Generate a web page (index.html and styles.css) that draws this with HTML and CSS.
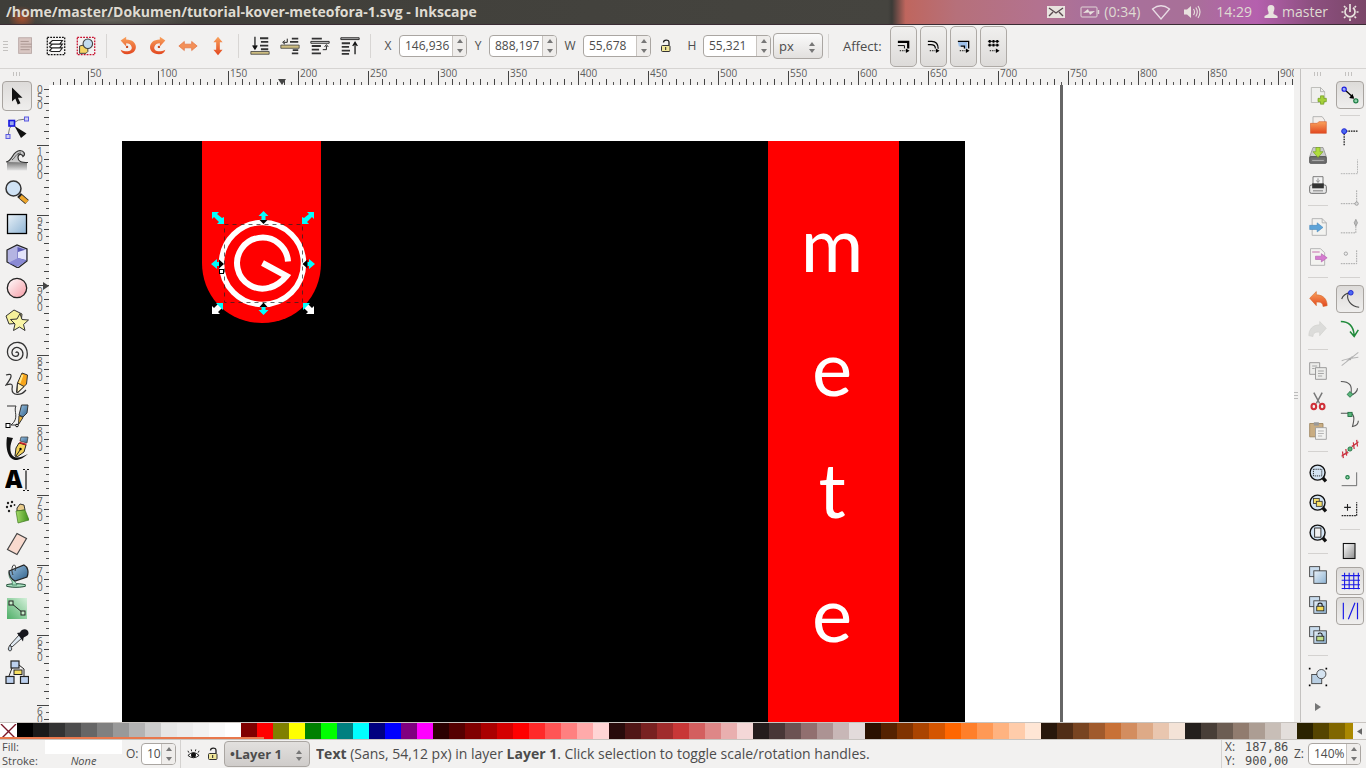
FILE: index.html
```html
<!DOCTYPE html>
<html lang="id">
<head>
<meta charset="utf-8">
<title>tutorial-kover-meteofora-1.svg - Inkscape</title>
<link rel="stylesheet" href="styles.css">
</head>
<body>
<svg class="defs" width="0" height="0" aria-hidden="true">
  <defs>
    <linearGradient id="orange" x1="0" y1="0" x2="0" y2="1"><stop offset="0" stop-color="#f9a25c"/><stop offset="1" stop-color="#e2471f"/></linearGradient>
    <linearGradient id="blue" x1="0" y1="0" x2="1" y2="1"><stop offset="0" stop-color="#e8f1f8"/><stop offset="1" stop-color="#8fb4d4"/></linearGradient>
    <linearGradient id="steel" x1="0" y1="0" x2="1" y2="1"><stop offset="0" stop-color="#9cc4e4"/><stop offset="1" stop-color="#2f5f88"/></linearGradient>
    <linearGradient id="page" x1="0" y1="0" x2="1" y2="1"><stop offset="0" stop-color="#ffffff"/><stop offset="1" stop-color="#8d8d8d"/></linearGradient>
    <linearGradient id="wave" x1="0" y1="0" x2="0" y2="1"><stop offset="0" stop-color="#777777"/><stop offset="1" stop-color="#e4e4e4"/></linearGradient>
    <linearGradient id="green" x1="0" y1="0" x2="1" y2="0"><stop offset="0" stop-color="#a6dc6a"/><stop offset="1" stop-color="#3f8f1c"/></linearGradient>
    <linearGradient id="mint" x1="0" y1="1" x2="1" y2="0"><stop offset="0" stop-color="#4faf68"/><stop offset="1" stop-color="#d4f0da"/></linearGradient>
    <linearGradient id="pink" x1="0" y1="0" x2="1" y2="1"><stop offset="0" stop-color="#ffffff"/><stop offset="1" stop-color="#f59aa4"/></linearGradient>
    <symbol id="i-lock" viewBox="0 0 14 16"><path d="M4.500 4.500C4.500 1.500 10 1 10 4.500V7" fill="none" stroke="#222" stroke-width="1.300"/><rect x="2.500" y="7.500" width="8.500" height="6" rx="1" fill="#f1e79a" stroke="#333"/><path d="M6.700 9v3" stroke="#222"/></symbol>
    <symbol id="i-zoom" viewBox="0 0 24 24"><path d="M17 17l4.500 5" stroke="#111" stroke-width="4"/><circle cx="11.500" cy="11.500" r="9" fill="#d4e4f3" stroke="#111" stroke-width="1.700"/></symbol>
    <symbol id="i-dup" viewBox="0 0 24 24"><rect x="2" y="2" width="12" height="12" fill="#c9dced" stroke="#333"/><rect x="7" y="7" width="15" height="15" fill="url(#blue)" stroke="#333"/></symbol>
  </defs>
</svg>

<header class="titlebar">
  <h1 class="titlebar-name">/home/master/Dokumen/tutorial-kover-meteofora-1.svg - Inkscape</h1>
  <div class="indicators">
    <svg class="ind-mail" viewBox="0 0 20 16"><rect x="1" y="2" width="18" height="12" fill="#e8e2de"/><path d="M3 4l7 5 7-5M3 12l4-4M17 12l-4-4" fill="none" stroke="#5a4a50" stroke-width="1.400"/></svg>
    <span class="ind-battery"><svg viewBox="0 0 20 14"><rect x="1" y="2" width="16" height="10" rx="1" fill="none" stroke="#e0d6d6"/><path d="M18.500 5v4" stroke="#e0d6d6" stroke-width="1.500"/><path d="M3 8l5-4 1 2.500L15 6l-5 4-1-2.500z" fill="#e8e2de"/></svg>(0:34)</span>
    <svg class="ind-wifi" viewBox="0 0 20 18"><path d="M1.500 6Q10-.5 18.500 6L10 16z" fill="none" stroke="#e8dce4" stroke-width="1.300"/></svg>
    <svg class="ind-sound" viewBox="0 0 18 16"><path d="M1 5.500h3L8 2v12L4 10.500H1z" fill="#e8e2de"/><path d="M10.500 5q2 3 0 6M12.800 3.500q3 4.500 0 9M15 2q4 6 0 12" fill="none" stroke="#e8e2de" stroke-width="1.100"/></svg>
    <time>14:29</time>
    <span class="ind-user"><svg viewBox="0 0 14 16"><path d="M7 1c4 0 4 4 2.500 7v2l4 2v2H.5v-2l4-2V8C3 5 3 1 7 1z" fill="#e8e2de"/></svg>master</span>
    <svg class="ind-power" viewBox="0 0 18 18"><g fill="none" stroke="#e8e2de" stroke-width="1.700"><path d="M6 4.800a5 5 0 1 0 6 0M9 1v8"/><path d="M2.500 9H.5M17.500 9h-2M9 15.500V18M3 3l1.500 1.500M15 3l-1.500 1.500M3 15l1.500-1.500M15 15l-1.500-1.500"/></g></svg>
  </div>
</header>

<div class="toolbar" role="toolbar" aria-label="Tool controls">
  <i class="grip"></i>
  <button class="tb" aria-label="Select all"><svg viewBox="0 0 24 24"><rect x="4" y="3" width="14" height="17" fill="#d9c7c3" stroke="#b9a9a6"/><path d="M6 7h9M6 10h12M6 13h12M6 16h10" stroke="#a5908c"/></svg></button>
  <button class="tb" aria-label="Select all in all layers"><svg viewBox="0 0 24 24"><rect x="2.500" y="2.500" width="19" height="19" fill="none" stroke="#111" stroke-width="1.400" stroke-dasharray="2 1.200"/><path d="M5 17l3-3h11l-3 4H7zM5 13l3-3h11l-3 4H7zM5 9l3-3h11l-3 4H7z" fill="#fff" stroke="#222" stroke-width="1.200"/></svg></button>
  <button class="tb" aria-label="Deselect"><svg viewBox="0 0 24 24"><rect x="2.500" y="2.500" width="19" height="19" fill="none" stroke="#c8102e" stroke-width="1.400" stroke-dasharray="2 1.200"/><path d="M5 12l9-2v8l-2 2H5z" fill="#f5d565" stroke="#333"/><circle cx="14" cy="9.500" r="5.200" fill="#c3dcf0" stroke="#444" stroke-width="1.200"/></svg></button>
  <i class="vsep"></i>
  <button class="tb" aria-label="Rotate left"><svg viewBox="0 0 24 24"><path d="M4 6l6-4v3c14 0 14 16 1 16-4 0-6-2-7-5 6 3 13 2 12-3-1-3-3-4-6-4v3.500z" fill="url(#orange)"/><circle cx="11" cy="13" r="1.300" fill="#c94a20"/></svg></button>
  <button class="tb" aria-label="Rotate right"><svg viewBox="0 0 24 24"><path d="M20 6l-6-4v3C0 5 0 21 13 21c4 0 6-2 7-5-6 3-13 2-12-3 1-3 3-4 6-4v3.500z" fill="url(#orange)"/><circle cx="13" cy="13" r="1.300" fill="#c94a20"/></svg></button>
  <button class="tb" aria-label="Flip horizontal"><svg viewBox="0 0 24 24"><path d="M2 12l6-5v3h8V7l6 5-6 5v-3H8v3z" fill="#f39058" stroke="#e26a35" stroke-width=".7"/></svg></button>
  <button class="tb" aria-label="Flip vertical"><svg viewBox="0 0 24 24"><path d="M12 2L7 8h3v8H7l5 6 5-6h-3V8h3z" fill="url(#orange)"/></svg></button>
  <i class="vsep"></i>
  <button class="tb" aria-label="Lower to bottom"><svg viewBox="0 0 24 24"><path d="M12 3.500h9M13 7.500h8M12 11.500h9M13 15.500h8" stroke="#333" stroke-width="2"/><path d="M6.500 2v12M4 11.500l2.500 4 2.500-4" stroke="#111" fill="#111" stroke-width="1.300"/><path d="M2 18h20v3H2z" fill="#cdbd82" stroke="#333" stroke-width=".8"/></svg></button>
  <button class="tb" aria-label="Lower"><svg viewBox="0 0 24 24"><path d="M14 4h7M12 7.500h9M15 16.500h6M14 20h7" stroke="#333" stroke-width="2"/><path d="M2 11h20v3.500H2z" fill="#cdbd82" stroke="#333" stroke-width=".8"/><path d="M9 4v4H5M6.500 6L4 8l2.500 2" stroke="#111" fill="none"/></svg></button>
  <button class="tb" aria-label="Raise"><svg viewBox="0 0 24 24"><path d="M3 4h11M3 12h10M3 16h8M3 20h10" stroke="#333" stroke-width="2"/><path d="M2 7h20v2H2z" fill="#ddd" stroke="#222"/><path d="M15 16h4v-4M17 13l2-2.500L21 13" stroke="#111" fill="none"/></svg></button>
  <button class="tb" aria-label="Raise to top"><svg viewBox="0 0 24 24"><path d="M2 3h20v2H2z" fill="#bbb" stroke="#222"/><path d="M3 9h9M3 13h8M3 17h9M3 20.500h8" stroke="#333" stroke-width="2"/><path d="M17.500 21V9M15 12l2.500-4 2.500 4" stroke="#111" fill="none" stroke-width="1.400"/></svg></button>
  <i class="vsep"></i>
  <label class="field" for="fx">X</label>
  <span class="spin"><input id="fx" type="text" value="146,936"><span class="arrows"><button class="up" aria-label="Increase X"></button><button class="down" aria-label="Decrease X"></button></span></span>
  <label class="field" for="fy">Y</label>
  <span class="spin"><input id="fy" type="text" value="888,197"><span class="arrows"><button class="up" aria-label="Increase Y"></button><button class="down" aria-label="Decrease Y"></button></span></span>
  <label class="field field-w" for="fw">W</label>
  <span class="spin"><input id="fw" type="text" value="55,678"><span class="arrows"><button class="up" aria-label="Increase width"></button><button class="down" aria-label="Decrease width"></button></span></span>
  <button class="lock" aria-label="Lock ratio"><svg viewBox="0 0 14 16"><use href="#i-lock"/></svg></button>
  <label class="field" for="fh">H</label>
  <span class="spin"><input id="fh" type="text" value="55,321"><span class="arrows"><button class="up" aria-label="Increase height"></button><button class="down" aria-label="Decrease height"></button></span></span>
  <span class="combo combo-unit"><select aria-label="Unit"><option>px</option></select></span>
  <i class="vsep vsep-near"></i>
  <span class="affect">Affect:</span>
  <button class="toggle" aria-label="Scale stroke width"><svg viewBox="0 0 16 16"><path d="M2 3h11v7" fill="none" stroke="#000" stroke-width="2.400"/><path d="M2 7h7v3" fill="none" stroke="#000"/><path d="M4 12.500h6" stroke="#000" stroke-dasharray="1.500 1"/><path d="M10.500 10l4 2.500-4 2.500z"/></svg></button>
  <button class="toggle" aria-label="Scale rounded corners"><svg viewBox="0 0 16 16"><path d="M2 2.500h4q7 0 7 8M2 6h3q5 0 5 4" fill="none" stroke="#000" stroke-width="1.300"/><path d="M4 12.500h6" stroke="#000" stroke-dasharray="1.500 1"/><path d="M10.500 10l4 2.500-4 2.500z"/></svg></button>
  <button class="toggle" aria-label="Move gradients"><svg viewBox="0 0 16 16"><path d="M2 3h10v7H9V8H3z" fill="#9dbfe8"/><path d="M2 2.500h11.500V10M9 10V7.500H5" fill="none" stroke="#000" stroke-width="1.400"/><path d="M4 12.500h6" stroke="#000" stroke-dasharray="1.500 1"/><path d="M10.500 10l4 2.500-4 2.500z"/></svg></button>
  <button class="toggle" aria-label="Move patterns"><svg viewBox="0 0 16 16"><path d="M2 2.500h12M2 6.500h12" stroke="#000"/><path d="M4 1v7M8 1v7M12 1v7" stroke="#000" stroke-width="2" stroke-dasharray="3 1"/><path d="M4 12.500h6" stroke="#000" stroke-dasharray="1.500 1"/><path d="M10.500 10l4 2.500-4 2.500z"/></svg></button>
</div>

<div class="workspace">
  <nav class="toolbox" aria-label="Tools">
    <i class="hgrip"></i>
    <button class="tool active" aria-label="Select"><svg viewBox="0 0 24 24"><path d="M7 3.500v14l3.300-3 2.400 6 2.800-1.200-2.600-5.600h4.600z" fill="#111"/></svg></button>
    <button class="tool" aria-label="Edit nodes"><svg viewBox="0 0 24 24"><path d="M3 20Q4 3 21 3" fill="none" stroke="#777"/><g fill="#cfcff5" stroke="#5a5ae0"><rect x="1" y="18.500" width="4" height="4"/><rect x="19.500" y="1" width="4" height="4"/></g><rect x="4" y="4.500" width="5.500" height="5.500" fill="#9aa8f0" stroke="#1414e0" stroke-width="1.600"/><path d="M9.500 10l12 7.500-5.500 4.500z" fill="#111"/></svg></button>
    <button class="tool" aria-label="Tweak"><svg viewBox="0 0 24 24"><path d="M2 14h20v8.500H2z" fill="url(#wave)"/><path d="M1 14c7-1 6-11 14-11.500 4 0 6 4 3 6-1-3-5-3-5 1s3 5 10 5" fill="#c9c9c9" stroke="#333" stroke-width="1.200"/><path d="M7 12c4-3 4-7 9-7" fill="none" stroke="#555"/></svg></button>
    <button class="tool" aria-label="Zoom"><svg viewBox="0 0 24 24"><path d="M14 15l8 7" stroke="#222" stroke-width="5.500"/><path d="M15.500 16.500l6.500 5.500" stroke="#eea62c" stroke-width="4"/><circle cx="8.500" cy="8.500" r="7.500" fill="#cfe2f5" stroke="#333" stroke-width="1.500"/></svg></button>
    <button class="tool" aria-label="Rectangle"><svg viewBox="0 0 24 24"><rect x="2.500" y="2.500" width="19" height="19" fill="url(#blue)" stroke="#000" stroke-width="1.300"/></svg></button>
    <button class="tool" aria-label="3D box"><svg viewBox="0 0 24 24"><path d="M2 6l10-5 10 4v12l-9 7-11-6z" fill="#b4b4e2" stroke="#222" stroke-width="1.200"/><path d="M12.500 3v12l-9 4.500L12.500 22l8.500-5V6z" fill="#5a5ab4"/><path d="M13 8l8-2.500V16l-8-2z" fill="#e4e4fa"/><path d="M13 14l8 2.500-8 6-9-4z" fill="#8a8ad4"/></svg></button>
    <button class="tool" aria-label="Ellipse"><svg viewBox="0 0 24 24"><circle cx="12" cy="12" r="9.700" fill="url(#pink)" stroke="#222" stroke-width="1.300"/></svg></button>
    <button class="tool" aria-label="Star"><svg viewBox="0 0 24 24"><path d="M1 8l8-6 8 4-1 9-12 1z" fill="#f5f09a" stroke="#333"/><path d="M15 5.500l2 6 6.500.5-5 4.500 1.500 6-5.500-3.500-6 3.500 1.500-6.500-4.500-4.500 6.500-.5z" fill="#faf6a6" stroke="#333"/></svg></button>
    <button class="tool" aria-label="Spiral"><svg viewBox="0 0 24 24"><path d="M11 13c0-2 3-1 2.500 1.500s-6 3-6.500-1.500 4-7 8-4.500 4 8.500-.5 11S3 19 2.500 12.500 8 1.500 14 2.500s10 8 7.500 16" fill="none" stroke="#333" stroke-width="1.300"/></svg></button>
    <button class="tool" aria-label="Pencil"><svg viewBox="0 0 24 24"><path d="M1 3c9-3 4 5 0 10 6-2 7-1 6 4 0 7 9 7 14 1" fill="none" stroke="#333" stroke-width="1.200"/><path d="M17 1l5.500 2-1 9-9 9-1-1 1-9z" fill="#f7a61b" stroke="#333"/><path d="M12.500 11l6.500 3.500-7 6.500z" fill="#fff3c4" stroke="#333"/><path d="M17.500 3l-3 8" stroke="#ffe98c" stroke-width="2"/></svg></button>
    <button class="tool" aria-label="Bezier"><svg viewBox="0 0 24 24"><path d="M2 2h9c-3 5 4 12-5 19h6" fill="none" stroke="#333"/><rect x="1" y="19.500" width="4" height="4" fill="#fff" stroke="#000"/><circle cx="12" cy="21.500" r="1.300" fill="#fff" stroke="#000"/><path d="M16.500 1h6.500l-1 8-4 4-4-2z" fill="url(#steel)" stroke="#333"/><path d="M14 11.500l4 2-4.500 7z" fill="#efb83a" stroke="#333"/></svg></button>
    <button class="tool" aria-label="Calligraphy"><svg viewBox="0 0 24 24"><path d="M2 1l6 1c-3 6-4 14 0 18 4 3 9 1 15-2-7 6-13 8-17 4C1 17 1 7 2 1z" fill="#111"/><path d="M16 1h7l-1 6-7-2z" fill="url(#steel)" stroke="#333" stroke-width=".7"/><path d="M14 7l7 2-2 7-7 5-2-1 1-8z" fill="#f4d35a" stroke="#222"/><path d="M14.500 6.500l7 2" stroke="#c22" stroke-width="1.700"/><path d="M11 20l4-6" stroke="#222"/><circle cx="15.500" cy="13" r="1.200"/></svg></button>
    <button class="tool tool-text" aria-label="Text"><svg viewBox="0 0 24 24"><text x="0" y="20">A</text><path d="M18 1.500h2M22 1.500h2M21 2.500v19M18 22.500h2M22 22.500h2" fill="none" stroke="#111" stroke-width="1.200"/></svg></button>
    <button class="tool" aria-label="Spray"><svg viewBox="0 0 24 24"><g fill="#222"><circle cx="3" cy="3" r="1.200"/><circle cx="7" cy="2" r="1.200"/><circle cx="2" cy="7" r="1.200"/><circle cx="6" cy="6" r="1.200"/><circle cx="4" cy="11" r="1.200"/><circle cx="9.500" cy="5" r=".9"/></g><path d="M12 8l3-4 4 1 1 5-8 1z" fill="#e8cb8a" stroke="#333"/><path d="M11 11l9-1 4 10-11 3z" fill="url(#green)" stroke="#3d7a1e" stroke-width=".7"/></svg></button>
    <button class="tool" aria-label="Eraser"><svg viewBox="0 0 24 24"><path d="M12 1.500l9.500 5-9.500 16-9.500-5z" fill="#f9dace" stroke="#444" stroke-width="1.200"/></svg></button>
    <button class="tool" aria-label="Bucket fill"><svg viewBox="0 0 24 24"><ellipse cx="11" cy="21.500" rx="10" ry="1.800" fill="#a9e2c0" stroke="#1f4a35"/><path d="M4 8c-1 8 5 8 3 13h5c-1-3-4-4-3-7z" fill="#a9e2c0" stroke="#2f6a50" stroke-width=".7"/><path d="M4 7l15-6c4 2 5 7 3 12l-12 4C6 15 4 11 4 7z" fill="url(#steel)" stroke="#222" stroke-width="1.200"/><path d="M8 11c-2-4-1-10 1-10s2 4 1 6" fill="none" stroke="#333"/></svg></button>
    <button class="tool" aria-label="Gradient"><svg viewBox="0 0 24 24"><rect x="2" y="2" width="20" height="21" fill="url(#mint)"/><path d="M6 7l12 10" stroke="#222"/><rect x="4" y="5" width="4" height="4" fill="#c6ecc9" stroke="#222"/><rect x="16" y="15" width="4" height="4" fill="#c6ecc9" stroke="#222"/></svg></button>
    <button class="tool" aria-label="Dropper"><svg viewBox="0 0 24 24"><path d="M14 7l3 3-10 9-2-2z" fill="#dfe9f2" stroke="#444"/><path d="M12 5l3-.5c2-5 9-4 8.500 1-.5 3-4.500 3-5 4.500l-.5 3.500z" fill="#16161c"/><path d="M5 17q-3.500 5 0 6 3.500-1 0-6z" fill="#c4d4e2" stroke="#444"/></svg></button>
    <button class="tool" aria-label="Connector"><svg viewBox="0 0 24 24"><path d="M7 8l-3 8M14 5l5 4v7" fill="none" stroke="#222"/><g fill="#bcd0ee" stroke="#222" stroke-width="1.200"><rect x="6" y="1" width="8" height="7"/><rect x="1" y="16.500" width="8" height="7"/><rect x="15.500" y="16.500" width="8" height="7"/></g><rect x="9" y="10" width="8" height="4.500" fill="#f7df62" stroke="#222"/></svg></button>
  </nav>

  <main class="desk">
    <ul class="ruler-h" id="ruler-h"></ul>
    <ul class="ruler-v" id="ruler-v"></ul>
    <svg class="marker-h" viewBox="0 0 8 6"><path d="M0 0h8L4 6z"/></svg>
    <svg class="marker-v" viewBox="0 0 6 8"><path d="M0 0v8l6-4z"/></svg>
    <svg class="canvas" role="img" aria-label="Drawing">
      <g transform="translate(-49 -85)">
        <rect x="1060" y="60" width="3" height="1600" fill="#666"/>
        <rect x="122" y="141" width="843" height="1192"/>
        <rect x="768" y="141" width="131" height="1192" fill="#f00"/>
        <path d="M202 141h119v122c0 33-24 60-59 60s-60-27-60-60z" fill="#f00"/>
        <text class="spine" x="832" y="272">m<tspan x="832" dy="124">e</tspan><tspan x="832" dy="122">t</tspan><tspan x="832" dy="124">e</tspan></text>
        <g fill="none" stroke="#fff">
          <circle cx="262.500" cy="263.500" r="41" stroke-width="5.500"/>
          <path d="M288 261.500A25.500 25.500 0 1 0 270 287.500Q279 285 286.500 276L262.500 263" stroke-width="6"/>
        </g>
        <rect x="224.500" y="224.500" width="78" height="78" fill="none" stroke="#222" stroke-opacity=".7" stroke-dasharray="4 4"/>
        <g fill="#0ff">
          <path d="M212 212h7l-2 2 5 4 2-1v7h-7l2-2-5-5-2 2z"/>
          <path d="M314 212h-7l2 2-5 4-2-1v7h7l-2-2 5-5 2 2z"/>
          <path d="M263.500 211l5 5h-3v4h-4v-4h-3z"/>
          <path d="M263.500 315l5-5h-3v-4h-4v4h-3z"/>
          <path d="M211 264l6-5v3h4v4h-4v3z"/>
          <path d="M315 264l-6-5v3h-4v4h4v3z"/>
        </g>
        <path d="M259.500 220h8l-4 4zM259.500 307h8l-4-4.500zM219 259.500v9l5-4.500zM307.500 259.500v9l-5-4.500z"/>
        <g fill="#fff">
          <path d="M212 314v-8l2 2 5-5 4 4-5 5 2 2z"/>
          <path d="M314 314v-8l-2 2-5-5-4 4 5 5-2 2z"/>
        </g>
        <path d="M216 303h7v7zM310 303h-7v7z" fill="#0ff"/>
        <rect x="219.500" y="269.500" width="4" height="4" fill="#fff" stroke="#000"/>
      </g>
    </svg>
    <i class="dock-grip"></i>
  </main>

  <div class="commands" role="toolbar" aria-label="Commands">
    <i class="hgrip"></i>
    <button class="cmd" aria-label="New"><svg viewBox="0 0 24 24"><path d="M4 3h11l5 5v13H4z" fill="#f0f0ee" stroke="#b5b5b0"/><path d="M15 3v5h5" fill="none" stroke="#aaa"/><path d="M15 13h4v3h3v4h-3v3h-4v-3h-3v-4h3z" fill="#a4cf3a" stroke="#6a9a1a" stroke-width=".8"/></svg></button>
    <button class="cmd" aria-label="Open"><svg viewBox="0 0 24 24"><path d="M6 2h11l3 4v7H6z" fill="#f3efec" stroke="#aaa"/><path d="M3 10h8l2-2h9v14H3z" fill="url(#orange)" stroke="#d4582a" stroke-width=".7"/></svg></button>
    <button class="cmd" aria-label="Save"><svg viewBox="0 0 24 24"><path d="M6 3h12l4 11H2z" fill="#ccc" stroke="#777" stroke-width=".7"/><rect x="2" y="14" width="20" height="8" rx="1" fill="#707070" stroke="#444"/><path d="M5 18.500h14" stroke="#bbb"/><path d="M9.500 3h5v5H18l-6 7-6-7h3.500z" fill="#b0dd3c" stroke="#6a9a1a" stroke-width=".7"/></svg></button>
    <button class="cmd" aria-label="Print"><svg viewBox="0 0 24 24"><path d="M6 2h12v10H6z" fill="#f4f4f4" stroke="#666"/><path d="M12 4v4M10 6.500l2 2.500 2-2.500" stroke="#777" fill="none"/><rect x="2" y="12" width="20" height="10" rx="2" fill="#e8e8e8" stroke="#555"/><path d="M5 10h14v6H5z" fill="#333"/><path d="M6 19h12" stroke="#666"/></svg></button>
    <i class="hsep"></i>
    <button class="cmd" aria-label="Import"><svg viewBox="0 0 24 24"><path d="M5 2h12l5 5v15H5z" fill="#f3f3f0" stroke="#aaa"/><path d="M17 2v5h5" fill="none" stroke="#aaa"/><path d="M2 10h9V7l7 5.500-7 5.500v-3H2z" fill="#5ea4d8" stroke="#3b7fb5" stroke-width=".6"/></svg></button>
    <button class="cmd" aria-label="Export"><svg viewBox="0 0 24 24"><path d="M3 2h12l5 5v15H3z" fill="#f3f3f0" stroke="#aaa"/><path d="M5 6h9" stroke="#d9a4c8" stroke-width="2"/><path d="M9 11h7V8l7 5-7 5v-3H9z" fill="#d57bd0" stroke="#a94fa4" stroke-width=".6"/></svg></button>
    <i class="hsep"></i>
    <button class="cmd" aria-label="Undo"><svg viewBox="0 0 24 24"><path d="M2 11l8-8v4c9 0 13 6 13 13l-5 1c0-4-3-6-8-5v4z" fill="url(#orange)" stroke="#d4682a" stroke-width=".7"/></svg></button>
    <button class="cmd" aria-label="Redo" disabled><svg viewBox="0 0 24 24"><path d="M22 11l-8-8v4C5 7 1 13 1 20l5 1c0-4 3-6 8-5v4z" fill="#dcdcda" stroke="#cfcfcc" stroke-width=".7"/></svg></button>
    <i class="hsep"></i>
    <button class="cmd" aria-label="Copy"><svg viewBox="0 0 24 24"><g fill="#ececea" stroke="#8c8c8c"><path d="M2 2h12v14H2z"/><path d="M9 8h13v14H9z"/></g><path d="M5 6h6M5 9h3M12 12h7M12 15h7M12 18h5" stroke="#999"/></svg></button>
    <button class="cmd" aria-label="Cut"><svg viewBox="0 0 24 24"><path d="M7 2l7 13M17 2l-7 13" stroke="#777" stroke-width="1.800"/><g fill="none" stroke="#cf3038" stroke-width="2.500"><ellipse cx="7" cy="18.500" rx="2.800" ry="3.300"/><ellipse cx="17" cy="18.500" rx="2.800" ry="3.300"/></g></svg></button>
    <button class="cmd" aria-label="Paste"><svg viewBox="0 0 24 24"><path d="M2 3h16v16H2z" fill="#c9ad82" stroke="#9b835d"/><path d="M7 1.500h6v4H7z" fill="#999"/><path d="M9 8h13v14H9z" fill="#f2f2f0" stroke="#999"/><path d="M12 12h7M12 15h7M12 18h5" stroke="#aaa"/></svg></button>
    <i class="hsep"></i>
    <button class="cmd" aria-label="Zoom selection"><svg viewBox="0 0 24 24"><use href="#i-zoom"/><rect x="6.500" y="7.500" width="10" height="8" fill="none" stroke="#111" stroke-dasharray="1.500 1"/></svg></button>
    <button class="cmd" aria-label="Zoom drawing"><svg viewBox="0 0 24 24"><use href="#i-zoom"/><rect x="6.500" y="6.500" width="7" height="6" fill="#f7e06a" stroke="#333"/><rect x="10" y="10" width="7" height="6" fill="#f7e06a" stroke="#333"/></svg></button>
    <button class="cmd" aria-label="Zoom page"><svg viewBox="0 0 24 24"><use href="#i-zoom"/><rect x="8" y="6" width="7.500" height="11" fill="#f2f2f2" stroke="#111"/></svg></button>
    <i class="hsep"></i>
    <button class="cmd" aria-label="Duplicate"><svg viewBox="0 0 24 24"><use href="#i-dup"/></svg></button>
    <button class="cmd" aria-label="Clone"><svg viewBox="0 0 24 24"><use href="#i-dup"/><path d="M12 14v-2c0-3 5-3 5 0v2" fill="none" stroke="#222" stroke-width="1.300"/><rect x="10.500" y="13.500" width="8.500" height="5.500" fill="#f7dd55" stroke="#222"/></svg></button>
    <button class="cmd" aria-label="Unlink clone"><svg viewBox="0 0 24 24"><use href="#i-dup"/><path d="M12 11c1-2 5-2 5 1v2" fill="none" stroke="#222" stroke-width="1.300"/><rect x="10.500" y="13.500" width="8.500" height="5.500" fill="#c3e08a" stroke="#222"/></svg></button>
    <i class="hsep"></i>
    <button class="cmd" aria-label="Group"><svg viewBox="0 0 24 24"><path d="M1 1h2v2H1zM21 1h2v2h-2zM1 21h2v2H1zM21 21h2v2h-2z"/><rect x="4.500" y="9" width="12" height="11" fill="#b9cfe3" stroke="#333"/><circle cx="16" cy="8.500" r="5.500" fill="#d5e3f0" stroke="#333"/></svg></button>
    <button class="cmd more" aria-label="More commands"><svg viewBox="0 0 8 8"><path d="M1 0l6 4-6 4z" fill="#777"/></svg></button>
  </div>

  <div class="snaps" role="toolbar" aria-label="Snapping">
    <i class="hgrip"></i>
    <button class="cmd active" aria-label="Enable snapping"><svg viewBox="0 0 24 24"><path d="M7 7l9 8" stroke="#000" stroke-width="1.500"/><path d="M17 16.500l-6-1 4-5z"/><circle cx="5" cy="5" r="2.500" fill="#9ab0f5" stroke="#1a1ae0" stroke-width="1.400"/><circle cx="19" cy="19" r="2.500" fill="#8fd0a8" stroke="#1a7a42" stroke-width="1.400"/></svg></button>
    <i class="hsep"></i>
    <button class="cmd" aria-label="Snap bounding boxes"><svg viewBox="0 0 24 24"><path d="M4 5h18M5 5v18" fill="none" stroke="#111" stroke-width="1.500" stroke-dasharray="2 1"/><circle cx="5" cy="5" r="3" fill="#4a6af0" stroke="#1414d0"/></svg></button>
    <button class="cmd" aria-label="Snap to edges"><svg viewBox="0 0 24 24"><path d="M1 20h20V3" fill="none" stroke="#aaa" stroke-dasharray="2 1"/></svg></button>
    <button class="cmd" aria-label="Snap to corners"><svg viewBox="0 0 24 24"><path d="M1 20h19V3" fill="none" stroke="#999" stroke-dasharray="2 1"/><circle cx="20" cy="20" r="2" fill="#ddd" stroke="#999"/></svg></button>
    <button class="cmd" aria-label="Snap to edge midpoints"><svg viewBox="0 0 24 24"><path d="M1 19h18V3" fill="none" stroke="#999" stroke-dasharray="2 1"/><path d="M19 3l2 4-2 4-2-4z" fill="#bbb" stroke="#999"/></svg></button>
    <button class="cmd" aria-label="Snap to centers"><svg viewBox="0 0 24 24"><path d="M1 20h19V3" fill="none" stroke="#999" stroke-dasharray="2 1"/><circle cx="7" cy="8" r="2" fill="#eee" stroke="#999"/></svg></button>
    <i class="hsep"></i>
    <button class="cmd active" aria-label="Snap nodes"><svg viewBox="0 0 24 24"><path d="M2 12q2-6 11-8M10 5c-3 8 3 16 13 17" fill="none" stroke="#444" stroke-width="1.300"/><circle cx="13" cy="4.500" r="2.800" fill="#4a6af0" stroke="#1414d0"/></svg></button>
    <button class="cmd" aria-label="Snap to paths"><svg viewBox="0 0 24 24"><path d="M1 3c10 0 15 6 16 16M12 15l5 6 5-8" fill="none" stroke="#1f8a3a" stroke-width="1.800"/></svg></button>
    <button class="cmd" aria-label="Snap to intersections"><svg viewBox="0 0 24 24"><path d="M2 20L22 4M2 14c6-2 12-3 20-4M8 15l7-6" fill="none" stroke="#b5b5b5" stroke-width="1.300"/><circle cx="12" cy="12" r="1.500" fill="#aaa"/></svg></button>
    <button class="cmd" aria-label="Snap to cusp nodes"><svg viewBox="0 0 24 24"><path d="M1 3c11 0 14 5 12 15M12 19c5 0 9-4 9-8" fill="none" stroke="#555" stroke-width="1.300"/><path d="M12 15l3.500 3.500L12 22l-3.500-3.500z" fill="#59b57c" stroke="#1a6a3a"/></svg></button>
    <button class="cmd" aria-label="Snap to smooth nodes"><svg viewBox="0 0 24 24"><path d="M1 5h12c5 2 4 8 2 16 5-1 7-4 7-7" fill="none" stroke="#555" stroke-width="1.300"/><rect x="9.500" y="4" width="5" height="5" fill="#59b57c" stroke="#1a6a3a"/></svg></button>
    <button class="cmd" aria-label="Snap to line midpoints"><svg viewBox="0 0 24 24"><path d="M2 21L22 3" stroke="#3a8a55"/><path d="M3 15l1 8M7 12l1 8M16 4l1 8M20 1l1 8M2 20l8-4M14 9l8-5" stroke="#cf3040" stroke-width="1.500"/><circle cx="12" cy="12" r="2.500" fill="#59b57c" stroke="#1a6a3a"/></svg></button>
    <button class="cmd" aria-label="Snap to object centers"><svg viewBox="0 0 24 24"><path d="M2 20h18V4" fill="none" stroke="#555"/><circle cx="9" cy="10" r="2" fill="#9fdcb4" stroke="#1a7a42" stroke-width="1.400"/></svg></button>
    <button class="cmd" aria-label="Snap to rotation centers"><svg viewBox="0 0 24 24"><path d="M2 20h18V4" fill="none" stroke="#222" stroke-width="1.400" stroke-dasharray="2 1"/><path d="M9 6v8M5 10h8" stroke="#222" stroke-width="1.300"/></svg></button>
    <i class="hsep"></i>
    <button class="cmd" aria-label="Snap to page"><svg viewBox="0 0 24 24"><rect x="4" y="3" width="14" height="18" fill="url(#page)" stroke="#111" stroke-width="1.300"/></svg></button>
    <button class="cmd active" aria-label="Snap to grid"><svg viewBox="0 0 24 24"><path d="M5.500 2v20M11 2v20M16.500 2v20M22 2v20M2 5.500h22M2 11h22M2 16.500h22M2 21h22" stroke="#1a1ae6" stroke-width="1.300"/></svg></button>
    <button class="cmd active" aria-label="Snap to guides"><svg viewBox="0 0 24 24"><path d="M4 2v20M10 22l8-20M21 2v20" stroke="#1a1ae6" stroke-width="1.400"/></svg></button>
  </div>
</div>

<div class="palette">
  <div class="swatches" id="swatches"><button class="swatch none" aria-label="No color"><svg viewBox="0 0 17 15"><path d="M1 0l15 15M16 0L1 15" stroke="#7a1828" stroke-width="1.400"/></svg></button></div>
  <button class="palette-menu" aria-label="Palette menu"><svg viewBox="0 0 6 8"><path d="M6 0v8L0 4z" fill="#666"/></svg></button>
  <i class="palette-scroll"></i>
</div>

<footer class="status">
  <dl class="style">
    <dt>Fill:</dt><dd class="fill"></dd>
    <dt>Stroke:</dt><dd class="stroke">None</dd>
  </dl>
  <label class="field-o" for="fo">O:</label>
  <span class="spin spin-o"><input id="fo" type="text" value="100"><span class="arrows"><button class="up" aria-label="Increase opacity"></button><button class="down" aria-label="Decrease opacity"></button></span></span>
  <i class="ssep"></i>
  <button class="eye" aria-label="Toggle layer visibility"><svg viewBox="0 0 14 14"><path d="M1 8q6-6 12 0-6 5-12 0z" fill="#fff" stroke="#111"/><circle cx="7" cy="7.500" r="2.700" fill="#111"/><path d="M2 5L1 3M5 3.500L4.500 1.500M9 3.500l.5-2M12 5l1-2" stroke="#111"/></svg></button>
  <button class="lock" aria-label="Lock layer"><svg viewBox="0 0 14 16"><use href="#i-lock"/></svg></button>
  <span class="combo combo-layer"><select aria-label="Layer"><option>•Layer 1</option></select></span>
  <p class="message"><b>Text</b> (Sans, 54,12 px) in layer <b>Layer 1</b>. Click selection to toggle scale/rotation handles.</p>
  <i class="ssep"></i>
  <dl class="coords"><dt>X:</dt><dd>187,86</dd><dt>Y:</dt><dd>900,00</dd></dl>
  <label class="field-z" for="fz">Z:</label>
  <span class="spin spin-z"><input id="fz" type="text" value="140%"><span class="arrows"><button class="up" aria-label="Zoom in"></button><button class="down" aria-label="Zoom out"></button></span></span>
</footer>
<script src="app.js"></script>
</body>
</html>
```
FILE: styles.css
```css
* { box-sizing: border-box; }

body {
  margin: 0;
  height: 100vh;
  display: flex;
  flex-direction: column;
  overflow: hidden;
  background: #f2f1f0;
  color: #4c4c4c;
  font: 13px/16px "Open Sans", "Noto Sans", sans-serif;
}

button, input, select { font: inherit; color: inherit; margin: 0; padding: 0; }
button { border: 0; background: none; display: grid; place-items: center; flex: none; }
ul, dl, dd, p, h1 { margin: 0; padding: 0; list-style: none; }
svg { display: block; }
.defs { position: absolute; }

/* title bar */
.titlebar {
  flex: none;
  height: 25px;
  display: flex;
  align-items: center;
  justify-content: space-between;
  padding: 0 7px 0 6px;
  color: #dfdbd2;
  border-bottom: 1px solid #3a2c34;
  background:
    radial-gradient(ellipse 14px 12px at 22px 18px, #a8502f 0, transparent 100%),
    radial-gradient(ellipse 90px 8px at 110px 20px, #66645c 0, transparent 100%),
    linear-gradient(90deg, #3f3e39 0, #45443f 65%, #3c3b37 65.300%, #bf665e 66.300%, #b6707a 70%, #b3728f 76%, #a8709c 80%, #a87098 87%, #b560ae 92%, #8d5080 96%, #7a4668 100%);
}
.titlebar-name { font-size: 14px; line-height: 24px; font-weight: 700; white-space: nowrap; }
.indicators { display: flex; align-items: center; font-size: 14px; }
.ind-mail { width: 20px; height: 16px; margin-right: 14px; }
.ind-battery, .ind-user { display: flex; align-items: center; gap: 4px; }
.ind-battery svg { width: 20px; height: 14px; }
.ind-wifi { width: 20px; height: 18px; margin: 0 12px 0 11px; }
.ind-sound { width: 18px; height: 16px; margin-right: 15px; }
.ind-user { margin: 0 13px 0 12px; }
.ind-user svg { width: 14px; height: 16px; }
.ind-power { width: 18px; height: 18px; }

/* tool controls */
.toolbar {
  flex: none;
  height: 44px;
  display: flex;
  align-items: center;
  padding: 0 0 1px 3px;
  border-bottom: 1px solid #d6d4d2;
  white-space: nowrap;
}
.grip { width: 5px; height: 11px; margin-right: 3px; background: repeating-linear-gradient(#c4c2c0 0 1px, transparent 1px 3px); }
.tb { width: 30px; height: 30px; }
.tb svg { width: 22px; height: 22px; }
.vsep { width: 1px; height: 24px; margin: 0 6px 0 5px; background: #d8d6d4; }
.field { width: 22px; text-align: center; font-size: 12px; }
.field-w { width: 26px; }
.lock { width: 30px; height: 26px; }
.lock svg { width: 14px; height: 16px; }

.spin {
  display: flex;
  width: 68px;
  height: 22px;
  border: 1px solid #aaa6a2;
  border-radius: 4px;
  background: #fff;
  overflow: hidden;
}
.spin input { flex: 1; min-width: 0; width: 0; border: 0; padding-left: 5px; background: none; font-size: 12px; }
.arrows { width: 14px; display: flex; flex-direction: column; background: #efedeb; border-left: 1px solid #c8c4c0; }
.arrows button { flex: 1; }
.arrows button::after { content: ""; border: 3px solid transparent; }
.arrows .up::after { border-bottom: 4px solid #777; border-top: 0; }
.arrows .down::after { border-top: 4px solid #777; border-bottom: 0; }

.combo {
  position: relative;
  display: flex;
  height: 26px;
  border: 1px solid #aaa6a2;
  border-radius: 4px;
  background: linear-gradient(#fafafa, #e2e0de);
}
.combo select { flex: 1; min-width: 0; appearance: none; border: 0; background: none; padding: 0 5px; }
.combo::before, .combo::after { content: ""; position: absolute; right: 7px; border: 3px solid transparent; pointer-events: none; }
.combo::before { top: 8px; border-bottom: 4px solid #777; border-top: 0; }
.combo::after { bottom: 5px; border-top: 4px solid #777; border-bottom: 0; }
.combo-unit { width: 50px; margin-left: 2px; }
.vsep-near { margin-right: 14px; }
.affect { width: 47px; }
.toggle {
  width: 27px;
  height: 41px;
  margin-right: 3px;
  border: 1px solid #aeaaa6;
  border-radius: 5px;
  background: linear-gradient(#f0efee, #dddbd9);
}
.toggle svg { width: 15px; height: 15px; }

/* workspace */
.workspace { flex: 1; min-height: 0; display: flex; }
.hgrip { flex: none; width: 9px; height: 4px; margin: 3px auto 5px; background: repeating-linear-gradient(90deg, #c4c2c0 0 1px, transparent 1px 3px); }
.commands .hgrip, .snaps .hgrip { margin-bottom: 4px; }
.toolbox { flex: none; width: 37px; padding-right: 3px; display: flex; flex-direction: column; align-items: center; }
.tool { width: 30px; height: 30px; margin-bottom: 2px; }
.tool svg { width: 24px; height: 24px; }
.tool-text text { font: 800 24px "Open Sans", sans-serif; }
.active { border: 1px solid #a8a4a0; border-radius: 4px; background: linear-gradient(#dddbd9, #efeeed); }

.desk {
  position: relative;
  flex: 1;
  min-width: 0;
  display: grid;
  grid-template: 16px minmax(0, 1fr) / 12px minmax(0, 1fr) 6px;
}
.ruler-h, .ruler-v {
  display: flex;
  overflow: hidden;
  color: #5c5c5c;
  font-family: "Liberation Sans Narrow", "Open Sans", sans-serif;
  font-size: 10px;
}
.ruler-h {
  grid-area: 1 / 2;
  padding-left: 39px;
  background:
    linear-gradient(90deg, #555 1px, transparent 1px) 4px 100% / 14px 3px repeat-x,
    linear-gradient(90deg, #444 1px, transparent 1px) 11px 100% / 14px 6px repeat-x;
}
.ruler-h li { flex: none; width: 70px; height: 14px; margin-top: 2px; padding-left: 1px; border-left: 1px solid #444; line-height: 5px; }
.ruler-v {
  grid-area: 2 / 1;
  flex-direction: column;
  line-height: 8px;
  background:
    linear-gradient(#555 1px, transparent 1px) 100% 11px / 3px 14px repeat-y,
    linear-gradient(#444 1px, transparent 1px) 100% 4px / 5px 14px repeat-y;
}
.ruler-v li { flex: none; height: 70px; width: 12px; padding-top: 1px; border-top: 1px solid #444; }
.ruler-v li:first-child { margin-top: -10px; }
.ruler-v span { display: block; width: 6px; }
.marker-h { position: absolute; left: 241px; top: 10px; width: 8px; height: 6px; fill: #444; }
.marker-v { position: absolute; left: 6px; top: 213px; width: 6px; height: 8px; fill: #444; }
.canvas { grid-area: 2 / 2; width: 100%; height: 100%; background: #fff; overflow: hidden; }
.spine { font: 76px Lato, sans-serif; fill: #fff; text-anchor: middle; }
.dock-grip { grid-area: 1 / 3 / 3 / 4; align-self: center; width: 4px; height: 8px; background: repeating-linear-gradient(#bbb 0 1px, transparent 1px 3px); }

.commands, .snaps { flex: none; display: flex; flex-direction: column; align-items: center; }
.commands { width: 35px; border-left: 1px solid #c4c2c0; }
.snaps { width: 31px; padding-right: 2px; }
.cmd { width: 28px; height: 28px; margin: 1px 0; }
.cmd svg { width: 20px; height: 20px; }
.cmd.more svg { width: 8px; height: 8px; }
.hsep { flex: none; width: 20px; height: 1px; margin: 5px 0 6px; background: #d4d2d0; }

/* palette */
.palette { position: relative; flex: none; height: 18px; display: flex; border-top: 1px solid #c8c4c0; border-bottom: 1px solid #c8c4c0; }
.swatches { flex: 1; min-width: 0; display: flex; overflow: hidden; }
.swatch { width: 16px; height: 16px; }
.swatch.none { width: 17px; background: #fff; }
.swatch.none svg { width: 17px; height: 15px; }
.palette-menu { width: 13px; }
.palette-menu svg { width: 5px; height: 7px; }
.palette-scroll { position: absolute; left: 0; bottom: 0; width: 264px; height: 2px; background: #e8784c; }

/* status bar */
.status { flex: none; height: 28px; display: flex; align-items: center; padding-right: 5px; white-space: nowrap; }
.style { display: grid; grid-template: 14px 14px / 43px 77px; width: 126px; padding-left: 2px; font-size: 11px; line-height: 14px; }
.fill { background: #fff; }
.stroke { font-style: italic; text-align: center; }
.field-o { width: 15px; font-size: 12px; }
.spin-o { width: 35px; }
.ssep { width: 1px; height: 28px; background: #d4d2d0; margin-left: 4px; }
.eye { width: 24px; height: 24px; }
.eye svg { width: 13px; height: 13px; }
.status .lock { width: 16px; }
.combo-layer { width: 86px; margin: 0 6px 0 3px; font-weight: 700; background: linear-gradient(#e2e0de, #cfccca); }
.message { flex: 1; min-width: 0; overflow: hidden; font-size: 14px; line-height: 20px; }
.coords { display: grid; grid-template: 14px 14px / 20px 45px; margin-left: 3px; font-size: 12px; line-height: 14px; }
.coords dd { font-family: "DejaVu Sans Mono", monospace; font-size: 12px; }
.field-z { width: 18px; text-align: center; font-size: 12px; }
.spin-z { width: 53px; }
```
FILE: app.js
```js
const colors = [
  '000000', '1a1a1a', '333333', '4d4d4d', '666666', '808080', '999999', 'b3b3b3', 'cccccc', 'e6e6e6', 'ececec', 'f2f2f2', 'f9f9f9', 'ffffff',
  '800000', 'ff0000', '808000', 'ffff00', '008000', '00ff00', '008080', '00ffff', '000080', '0000ff', '800080', 'ff00ff',
  '2b0000', '550000', '800000', 'aa0000', 'd40000', 'ff0000', 'ff2a2a', 'ff5555', 'ff8080', 'ffaaaa', 'ffd5d5',
  '280b0b', '501616', '782121', 'a02c2c', 'c83737', 'd35f5f', 'de8787', 'e9afaf', 'f4d7d7',
  '241c1c', '483737', '6c5353', '916f6f', 'ac9393', 'c8b7b7', 'e3dbdb',
  '2b1100', '552200', '803300', 'aa4400', 'd45500', 'ff6600', 'ff7f2a', 'ff9955', 'ffb380', 'ffccaa', 'ffe6d5',
  '28170b', '502d16', '784421', 'a05a2c', 'c87137', 'd38d5f', 'deaa87', 'e9c6af', 'f4e3d7',
  '241f1c', '483e37', '6c5d53', '917c6f', 'ac9d93', 'c8beb7', 'e3dedb',
  '2b2200', '554400', '806600', 'aa8800'
];
const swatches = document.getElementById('swatches');
for (const c of colors) {
  const b = document.createElement('button');
  b.className = 'swatch';
  b.style.background = '#' + c;
  b.setAttribute('aria-label', '#' + c);
  swatches.append(b);
}

const rulerH = document.getElementById('ruler-h');
for (let n = 50; n <= 900; n += 50) {
  const li = document.createElement('li');
  li.textContent = n;
  rulerH.append(li);
}

// Vertical labels are written one digit per line.
const rulerV = document.getElementById('ruler-v');
for (let n = 1050; n >= 600; n -= 50) {
  const li = document.createElement('li');
  for (const d of String(n)) {
    const s = document.createElement('span');
    s.textContent = d;
    li.append(s);
  }
  rulerV.append(li);
}
```
